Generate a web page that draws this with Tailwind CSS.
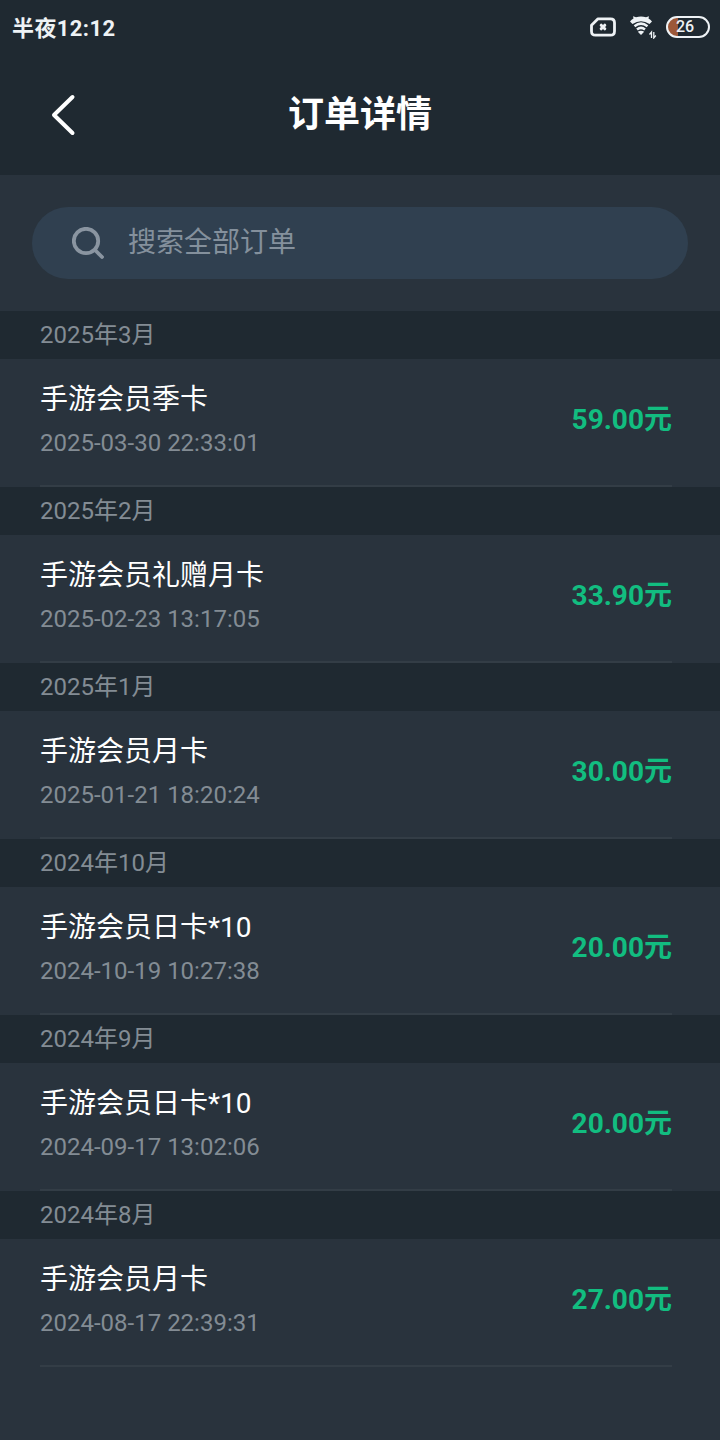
<!DOCTYPE html>
<html lang="zh-CN">
<head>
    <meta charset="UTF-8">
    <meta name="viewport" content="width=device-width, initial-scale=1.0">
    <title>订单详情</title>
    <script src="https://cdn.jsdelivr.net/npm/@tailwindcss/browser@4"></script>
</head>
<body class="bg-[#29333d] min-h-screen font-[Roboto,'Noto_Sans_CJK_SC',sans-serif] text-white">
    <!-- Status bar -->
    <div class="bg-[#1f2931] h-[54px] pl-3 pr-2.5 flex items-center justify-between text-[#eef2f5]">
        <span class="text-[22px] leading-8 font-bold tracking-[0.4px] pt-1">半夜12:12</span>
        <div class="flex items-center">
            <svg class="w-[26px] h-[20px] mr-3.5" viewBox="0 0 26 20" fill="none" stroke="currentColor" stroke-linecap="round" stroke-linejoin="round">
                <path d="M8 1.8H20.5Q24.5 1.8 24.5 5.8V14.2Q24.5 18.2 20.5 18.2H5.5Q1.5 18.2 1.5 14.2V8.2Z" stroke-width="2.8"/>
                <path d="M11.2 8.2l3.600 3.600M14.800 8.200l-3.600 3.600" stroke-width="3"/>
            </svg>
            <svg class="w-[27px] h-[24px] mr-[9px]" viewBox="0 0 27 24" fill="none" stroke="currentColor">
                <path d="M0 6.5Q1.5 4.5 3.5 3.5L3 1.2L6 2.2Q11 .7 16 2.2L19 1.2L18.500 3.5Q20.500 4.500 22 6.500L19.500 9Q11 3.500 2.500 9Z" fill="currentColor" stroke="none"/>
                <path d="M4.500 11.200Q11 6 17.500 11.200M7 14.500Q11 11.200 15 14.500" stroke-width="2.500"/>
                <path d="M7.800 16.800Q11 14.600 14.200 16.800L11 20Z" fill="currentColor" stroke="none"/>
                <path d="M21.500 23V17L19.500 19.500M23.800 17V23L25.800 20.500" stroke-width="1.300"/>
            </svg>
            <div class="w-[44px] h-[22px] rounded-full border-2 border-current overflow-hidden bg-linear-to-r from-[#9c5738] from-25% to-transparent to-25% flex items-center pl-2">
                <span class="text-[16px] leading-none font-medium">26</span>
            </div>
        </div>
    </div>

    <!-- Title bar -->
    <header class="bg-[#1f2931] h-[121px] px-[50px] grid grid-cols-[26px_1fr_26px] items-center">
        <svg class="w-[26px] h-[42px]" viewBox="0 0 26 42" fill="none" stroke="white" stroke-width="4" stroke-linecap="round" stroke-linejoin="round">
            <path d="M22.500 3L4 21l18.500 18"/>
        </svg>
        <h1 class="text-[36px] leading-[48px] font-bold text-center">订单详情</h1>
    </header>

    <!-- Search -->
    <div class="px-8 py-8">
        <div class="h-[72px] rounded-full bg-[#304050] flex items-center pl-10 text-[#84909c]">
            <svg class="w-8 h-8 mr-6" viewBox="0 0 32 32" fill="none" stroke="#8a95a1" stroke-width="3.800" stroke-linecap="round">
                <circle cx="14" cy="14" r="12.200"/>
                <path d="M23 23l7 7"/>
            </svg>
            <span class="text-[28px] leading-10">搜索全部订单</span>
        </div>
    </div>

    <!-- Orders by month -->
    <main>
        <section>
            <h2 class="h-12 px-10 bg-[#1f2931] text-[24px] leading-[48px] text-[#838c94]">2025年3月</h2>
            <div class="h-32 ml-10 mr-12 border-b-2 border-[#333d46] flex items-center justify-between">
                <div>
                    <p class="text-[28px] leading-[42px]">手游会员季卡</p>
                    <p class="text-[24px] leading-[44px] text-[#838c94]">2025-03-30 22:33:01</p>
                </div>
                <span class="text-[28px] leading-10 pb-1 font-bold text-[#12bd80]">59.00元</span>
            </div>
        </section>

        <section>
            <h2 class="h-12 px-10 bg-[#1f2931] text-[24px] leading-[48px] text-[#838c94]">2025年2月</h2>
            <div class="h-32 ml-10 mr-12 border-b-2 border-[#333d46] flex items-center justify-between">
                <div>
                    <p class="text-[28px] leading-[42px]">手游会员礼赠月卡</p>
                    <p class="text-[24px] leading-[44px] text-[#838c94]">2025-02-23 13:17:05</p>
                </div>
                <span class="text-[28px] leading-10 pb-1 font-bold text-[#12bd80]">33.90元</span>
            </div>
        </section>

        <section>
            <h2 class="h-12 px-10 bg-[#1f2931] text-[24px] leading-[48px] text-[#838c94]">2025年1月</h2>
            <div class="h-32 ml-10 mr-12 border-b-2 border-[#333d46] flex items-center justify-between">
                <div>
                    <p class="text-[28px] leading-[42px]">手游会员月卡</p>
                    <p class="text-[24px] leading-[44px] text-[#838c94]">2025-01-21 18:20:24</p>
                </div>
                <span class="text-[28px] leading-10 pb-1 font-bold text-[#12bd80]">30.00元</span>
            </div>
        </section>

        <section>
            <h2 class="h-12 px-10 bg-[#1f2931] text-[24px] leading-[48px] text-[#838c94]">2024年10月</h2>
            <div class="h-32 ml-10 mr-12 border-b-2 border-[#333d46] flex items-center justify-between">
                <div>
                    <p class="text-[28px] leading-[42px]">手游会员日卡*10</p>
                    <p class="text-[24px] leading-[44px] text-[#838c94]">2024-10-19 10:27:38</p>
                </div>
                <span class="text-[28px] leading-10 pb-1 font-bold text-[#12bd80]">20.00元</span>
            </div>
        </section>

        <section>
            <h2 class="h-12 px-10 bg-[#1f2931] text-[24px] leading-[48px] text-[#838c94]">2024年9月</h2>
            <div class="h-32 ml-10 mr-12 border-b-2 border-[#333d46] flex items-center justify-between">
                <div>
                    <p class="text-[28px] leading-[42px]">手游会员日卡*10</p>
                    <p class="text-[24px] leading-[44px] text-[#838c94]">2024-09-17 13:02:06</p>
                </div>
                <span class="text-[28px] leading-10 pb-1 font-bold text-[#12bd80]">20.00元</span>
            </div>
        </section>

        <section>
            <h2 class="h-12 px-10 bg-[#1f2931] text-[24px] leading-[48px] text-[#838c94]">2024年8月</h2>
            <div class="h-32 ml-10 mr-12 border-b-2 border-[#333d46] flex items-center justify-between">
                <div>
                    <p class="text-[28px] leading-[42px]">手游会员月卡</p>
                    <p class="text-[24px] leading-[44px] text-[#838c94]">2024-08-17 22:39:31</p>
                </div>
                <span class="text-[28px] leading-10 pb-1 font-bold text-[#12bd80]">27.00元</span>
            </div>
        </section>
    </main>
</body>
</html>
